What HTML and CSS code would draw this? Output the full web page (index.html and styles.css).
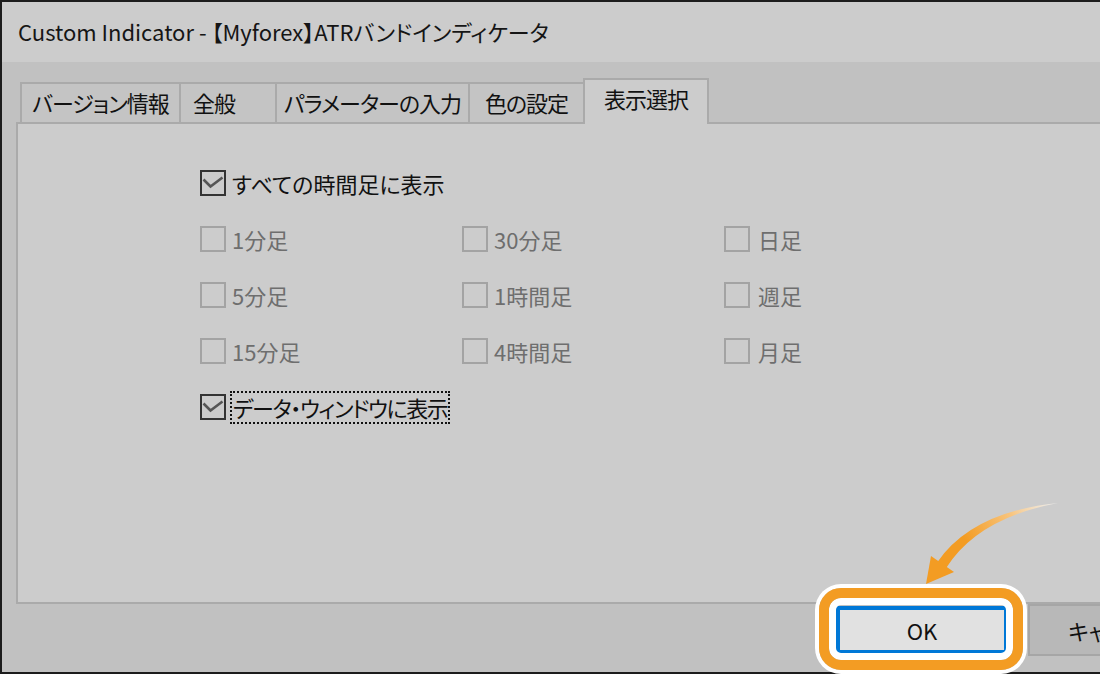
FILE: index.html
```html
<!DOCTYPE html>
<html lang="ja">
<head>
<meta charset="utf-8">
<title>Custom Indicator</title>
<link rel="stylesheet" href="styles.css">
</head>
<body>
<div class="window">
  <div class="titlebar">Custom Indicator - 【Myforex】ATRバンドインディケータ</div>
  <div class="dialog">
    <div class="tabs">
      <div class="tab t1">バージョン情報</div>
      <div class="tab t2">全般</div>
      <div class="tab t3">パラメーターの入力</div>
      <div class="tab t4">色の設定</div>
      <div class="tab t5 selected">表示選択</div>
    </div>
    <div class="panel">
      <div class="row">
        <span class="box checked"><svg viewBox="0 0 26 26" width="26" height="26"><path d="M3.5 9.5 L10.5 16.5 L22.5 7.5" fill="none" stroke="#555" stroke-width="2.6"/></svg></span>
        <span class="label">すべての時間足に表示</span>
      </div>
      <div class="grid">
        <div class="cell"><span class="box dis"></span><span class="label dim">1分足</span></div>
        <div class="cell"><span class="box dis"></span><span class="label dim">30分足</span></div>
        <div class="cell"><span class="box dis"></span><span class="label dim wide">日足</span></div>
        <div class="cell"><span class="box dis"></span><span class="label dim">5分足</span></div>
        <div class="cell"><span class="box dis"></span><span class="label dim">1時間足</span></div>
        <div class="cell"><span class="box dis"></span><span class="label dim wide">週足</span></div>
        <div class="cell"><span class="box dis"></span><span class="label dim">15分足</span></div>
        <div class="cell"><span class="box dis"></span><span class="label dim">4時間足</span></div>
        <div class="cell"><span class="box dis"></span><span class="label dim wide">月足</span></div>
      </div>
      <div class="row">
        <span class="box checked"><svg viewBox="0 0 26 26" width="26" height="26"><path d="M3.5 9.5 L10.5 16.5 L22.5 7.5" fill="none" stroke="#555" stroke-width="2.6"/></svg></span>
        <span class="label focus">データ・ウィンドウに表示</span>
      </div>
    </div>
    <div class="footer">
      <div class="btn ok">OK</div>
      <div class="btn cancel">キャンセル</div>
    </div>
  </div>
  <div class="highlight"></div>
  <svg class="arrow" width="1100" height="674" viewBox="0 0 1100 674">
    <defs>
      <linearGradient id="ag" gradientUnits="userSpaceOnUse" x1="1058" y1="503" x2="942" y2="566">
        <stop offset="0" stop-color="#ffffff" stop-opacity="0.6"/>
        <stop offset="0.35" stop-color="#f8c57f"/>
        <stop offset="0.75" stop-color="#f39c23"/>
        <stop offset="1" stop-color="#f39c23"/>
      </linearGradient>
    </defs>
    <path d="M937.5 562 Q972 512 1058 503 Q978 518 946.5 567.5 Z" fill="url(#ag)"/>
    <polygon points="926,584 931,556 954,572" fill="#f39c23"/>
  </svg>
</div>
</body>
</html>
```
FILE: styles.css
```css
* { box-sizing: border-box; }
html, body { margin: 0; padding: 0; }
body {
  width: 1100px;
  height: 674px;
  overflow: hidden;
  font-family: "Noto Sans CJK JP", "Noto Sans", sans-serif;
  font-feature-settings: "palt";
  color: #111;
}
.window {
  position: relative;
  width: 1100px;
  height: 674px;
  overflow: hidden;
  background: #1c1c1c;
  padding: 2px 0 2px 2px;
  display: flex;
  flex-direction: column;
}
.titlebar {
  height: 60px;
  flex-shrink: 0;
  background: #cccccc;
  padding-left: 16px;
  display: flex;
  align-items: center;
  font-size: 22px;
  color: #151515;
  padding-bottom: 2px;
  white-space: nowrap;
}
.dialog {
  flex: 1;
  background: #c1c1c1;
  padding: 16px 0 0 14px;
  display: flex;
  flex-direction: column;
}
.tabs {
  height: 46px;
  display: flex;
  align-items: flex-start;
  padding-left: 4px;
  margin-bottom: -2px;
  position: relative;
  z-index: 1;
  flex-shrink: 0;
}
.tab {
  height: 40px;
  margin-top: 4px;
  border: 2px solid #aaaaaa;
  border-bottom: none;
  background: #c4c4c4;
  margin-right: -2px;
  display: flex;
  align-items: center;
  justify-content: center;
  font-size: 22px;
  letter-spacing: -1px;
  padding-bottom: 3px;
  flex-shrink: 0;
  white-space: nowrap;
}
.t1 { width: 161px; }
.t2 { width: 98px; justify-content: flex-start; padding-left: 12px; }
.t3 { width: 195px; }
.t4 { width: 117px; }
.t5 { width: 126px; }
.tab.selected {
  margin-top: 0;
  height: 46px;
  background: #cccccc;
  padding-bottom: 9px;
  position: relative;
  z-index: 2;
}
.panel {
  height: 482px;
  flex-shrink: 0;
  background: #cccccc;
  border: 2px solid #aaaaaa;
  border-right: none;
  padding: 31px 0 0 182px;
}
.row {
  height: 56px;
  display: flex;
  align-items: center;
}
.grid {
  display: grid;
  grid-template-columns: 262px 262px 262px;
  grid-auto-rows: 56px;
}
.cell {
  display: flex;
  align-items: center;
}
.box {
  width: 26px;
  height: 26px;
  flex-shrink: 0;
  border: 2px solid #a3a3a3;
  position: relative;
}
.box.checked {
  border-color: #333333;
}
.box svg {
  position: absolute;
  left: -2px;
  top: -2px;
}
.label {
  font-size: 22px;
  margin-left: 6px;
  line-height: 30px;
  color: #111;
  white-space: nowrap;
}
.label.dim { color: #6e6e6e; }
.label.wide { margin-left: 8px; }
.label.focus {
  margin-left: 4px;
  border: 2px dotted #111;
  padding: 0 1px;
  line-height: 29px;
  letter-spacing: -1.4px;
}
.footer {
  height: 68px;
  display: flex;
  align-items: flex-start;
  padding-left: 820px;
  flex-shrink: 0;
}
.btn {
  flex-shrink: 0;
  display: flex;
  align-items: center;
  justify-content: center;
  font-size: 22px;
  white-space: nowrap;
}
.ok {
  width: 172px;
  height: 48px;
  margin-top: 2px;
  border: 4px solid #0078d7;
  background: #e1e1e1;
  color: #111;
}
.cancel {
  width: 180px;
  height: 52px;
  margin-left: 20px;
  border: 2px solid #a6a6a6;
  background: #b8b8b8;
  color: #111;
}
.highlight {
  position: absolute;
  left: 819px;
  top: 588px;
  width: 204px;
  height: 82px;
  border: 10px solid #f39c23;
  border-radius: 22px;
  box-shadow: 0 0 0 4px #ffffff, inset 0 0 0 7px #ffffff;
}
.arrow {
  position: absolute;
  left: 0;
  top: 0;
  pointer-events: none;
}
```
